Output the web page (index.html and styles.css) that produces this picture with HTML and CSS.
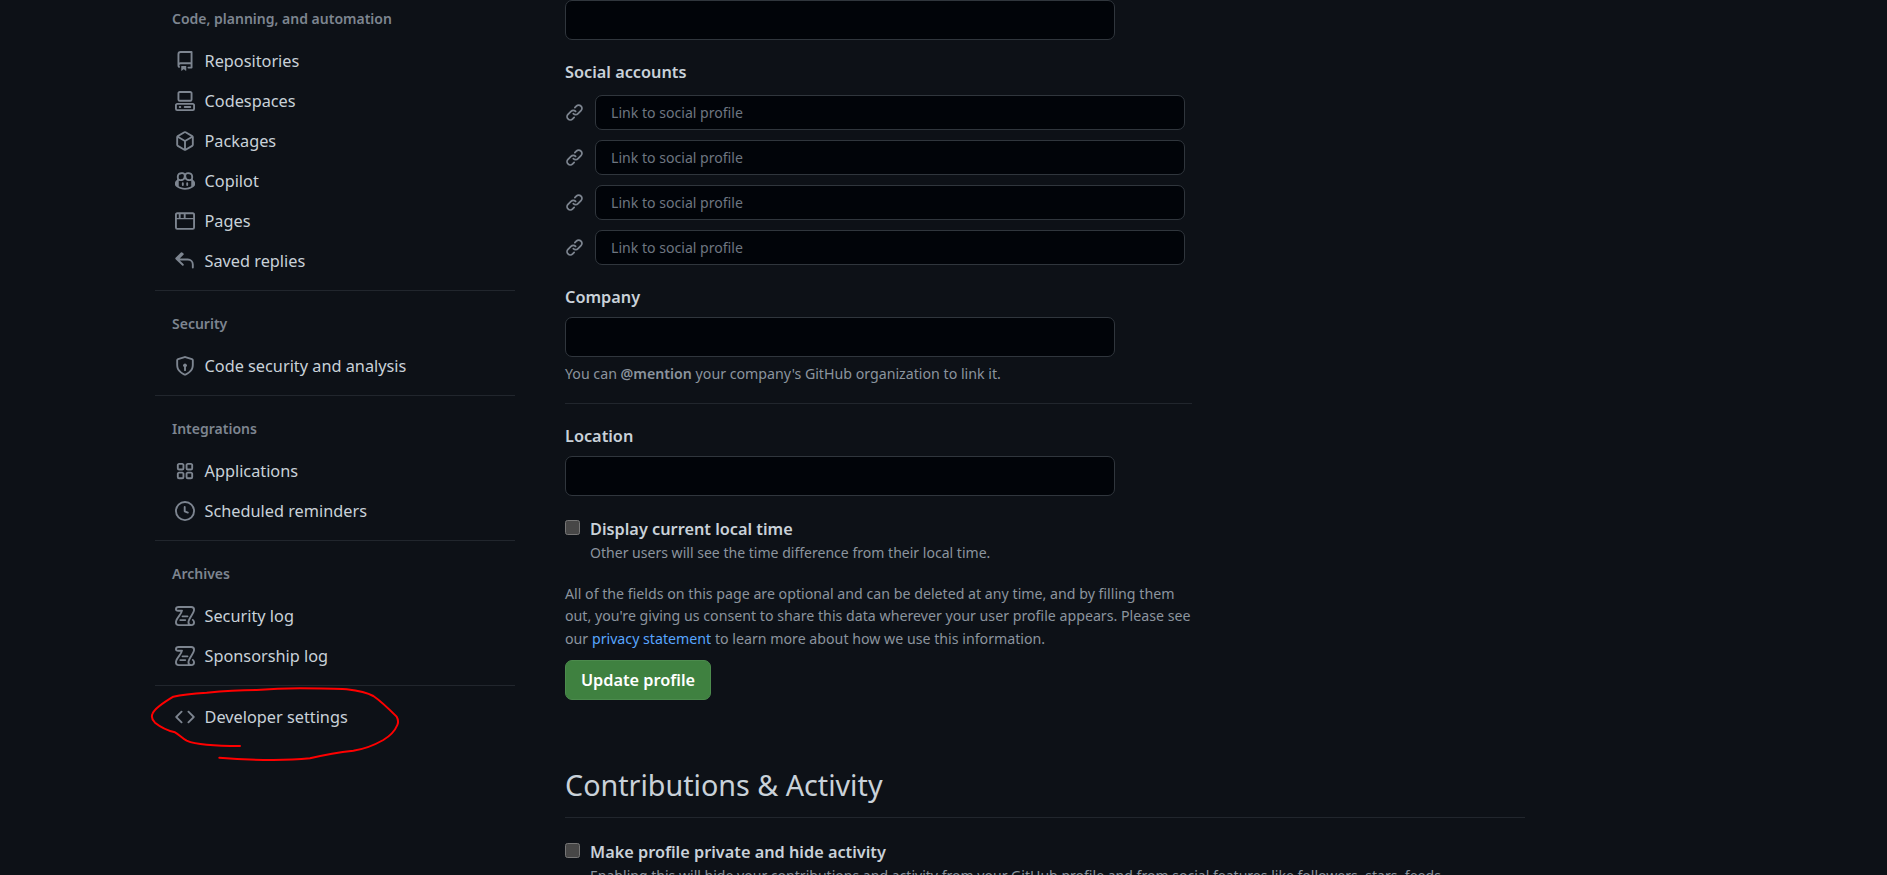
FILE: index.html
```html
<!DOCTYPE html>
<html lang="en">
<head>
<meta charset="utf-8">
<title>Public profile</title>
<link rel="stylesheet" href="styles.css">
</head>
<body>
<svg class="defs" width="0" height="0" aria-hidden="true">
  <symbol id="i-repo" viewBox="0 0 16 16"><path d="M2 2.5A2.5 2.5 0 0 1 4.5 0h8.75a.75.75 0 0 1 .75.75v12.5a.75.75 0 0 1-.75.75h-2.5a.75.75 0 0 1 0-1.5h1.75v-2h-8a1 1 0 0 0-.714 1.7.75.75 0 1 1-1.072 1.05A2.495 2.495 0 0 1 2 11.5Zm10.5-1h-8a1 1 0 0 0-1 1v6.708A2.486 2.486 0 0 1 4.5 9h8ZM5 12.25a.25.25 0 0 1 .25-.25h3.5a.25.25 0 0 1 .25.25v3.25a.25.25 0 0 1-.4.2l-1.45-1.087a.249.249 0 0 0-.3 0L5.4 15.7a.25.25 0 0 1-.4-.2Z"/></symbol>
  <symbol id="i-codespaces" viewBox="0 0 16 16"><path d="M0 11.25c0-.966.784-1.75 1.75-1.75h12.5c.966 0 1.75.784 1.75 1.75v3A1.75 1.75 0 0 1 14.25 16H1.75A1.75 1.75 0 0 1 0 14.25Zm2-9.5C2 .784 2.784 0 3.75 0h8.5C13.216 0 14 .784 14 1.75v5a1.75 1.75 0 0 1-1.75 1.75h-8.5A1.75 1.75 0 0 1 2 6.75Zm1.75-.25a.25.25 0 0 0-.25.25v5c0 .138.112.25.25.25h8.5a.25.25 0 0 0 .25-.25v-5a.25.25 0 0 0-.25-.25Zm-2 9.5a.25.25 0 0 0-.25.25v3c0 .138.112.25.25.25h12.5a.25.25 0 0 0 .25-.25v-3a.25.25 0 0 0-.25-.25Z"/><path d="M7 12.75a.75.75 0 0 1 .75-.75h4.5a.75.75 0 0 1 0 1.5h-4.5a.75.75 0 0 1-.75-.75Zm-4 0a.75.75 0 0 1 .75-.75h.5a.75.75 0 0 1 0 1.5h-.5a.75.75 0 0 1-.75-.75Z"/></symbol>
  <symbol id="i-package" viewBox="0 0 16 16"><path d="m8.878.392 5.25 3.045c.54.314.872.89.872 1.514v6.098a1.75 1.75 0 0 1-.872 1.514l-5.25 3.045a1.75 1.75 0 0 1-1.756 0l-5.25-3.045A1.75 1.75 0 0 1 1 11.049V4.951c0-.624.332-1.201.872-1.514L7.122.392a1.75 1.75 0 0 1 1.756 0ZM7.875 1.69l-4.63 2.685L8 7.133l4.755-2.758-4.63-2.685a.248.248 0 0 0-.25 0ZM2.5 5.677v5.372c0 .09.047.171.125.216l4.625 2.683V8.432Zm6.25 8.271 4.625-2.683a.25.25 0 0 0 .125-.216V5.677L8.75 8.432Z"/></symbol>
  <symbol id="i-copilot" viewBox="0 0 16 16"><path d="M7.998 15.035c-4.562 0-7.873-2.914-7.998-3.749V9.338c.085-.628.677-1.686 1.588-2.065.013-.07.024-.143.036-.218.029-.183.06-.384.126-.612-.201-.508-.254-1.084-.254-1.656 0-.87.128-1.769.693-2.484.579-.733 1.494-1.124 2.724-1.261 1.206-.134 2.262.034 2.944.765.05.053.096.108.139.165.044-.057.094-.112.143-.165.682-.731 1.738-.899 2.944-.765 1.23.137 2.145.528 2.724 1.261.566.715.693 1.614.693 2.484 0 .572-.053 1.148-.254 1.656.066.228.098.429.126.612.012.076.024.148.037.218.924.385 1.522 1.471 1.591 2.095v1.872c0 .766-3.351 3.795-8.002 3.795Zm0-1.485c2.28 0 4.584-1.11 5.002-1.433V7.862l-.023-.116c-.49.21-1.075.291-1.727.291-1.146 0-2.059-.327-2.71-.991A3.222 3.222 0 0 1 8 6.303a3.24 3.24 0 0 1-.544.743c-.65.664-1.563.991-2.71.991-.652 0-1.236-.081-1.727-.291l-.023.116v4.255c.419.323 2.722 1.433 5.002 1.433ZM6.762 2.83c-.193-.206-.637-.413-1.682-.297-1.019.113-1.479.404-1.713.7-.247.312-.369.789-.369 1.554 0 .793.129 1.171.308 1.371.162.181.519.379 1.442.379.853 0 1.339-.235 1.638-.54.315-.322.527-.827.617-1.553.117-.935-.037-1.395-.241-1.614Zm4.155-.297c-1.044-.116-1.488.091-1.681.297-.204.219-.359.679-.242 1.614.091.726.303 1.231.618 1.553.299.305.784.54 1.638.54.922 0 1.28-.198 1.442-.379.179-.2.308-.578.308-1.371 0-.765-.123-1.242-.37-1.554-.233-.296-.693-.587-1.713-.7Z"/><path d="M6.25 9.037a.75.75 0 0 1 .75.75v1.501a.75.75 0 0 1-1.5 0V9.787a.75.75 0 0 1 .75-.75Zm4.25.75v1.501a.75.75 0 0 1-1.5 0V9.787a.75.75 0 0 1 1.5 0Z"/></symbol>
  <symbol id="i-browser" viewBox="0 0 16 16"><path d="M0 2.75C0 1.784.784 1 1.75 1h12.5c.966 0 1.75.784 1.75 1.75v10.5A1.75 1.75 0 0 1 14.25 15H1.75A1.75 1.75 0 0 1 0 13.25ZM14.5 6.5h-13v6.75c0 .138.112.25.25.25h12.5a.25.25 0 0 0 .25-.25Zm-6-1h6V2.75a.25.25 0 0 0-.25-.25H8.5Zm-1.5 0V2.5H4.5v3ZM3 2.5H1.75a.25.25 0 0 0-.25.25V5.5H3Z"/></symbol>
  <symbol id="i-reply" viewBox="0 0 16 16"><path d="M6.78 1.97a.75.75 0 0 1 0 1.06L3.81 6h6.44A4.75 4.75 0 0 1 15 10.75v2.5a.75.75 0 0 1-1.5 0v-2.5a3.25 3.25 0 0 0-3.25-3.25H3.81l2.97 2.97a.749.749 0 1 1-1.06 1.06L.47 6.53a.75.75 0 0 1 0-1.06l4.25-4.25a.75.75 0 0 1 1.06 0Z"/></symbol>
  <symbol id="i-shield" viewBox="0 0 16 16"><path d="M7.467.133a1.748 1.748 0 0 1 1.066 0l5.25 1.68A1.75 1.75 0 0 1 15 3.48V7c0 1.566-.32 3.182-1.303 4.682-.983 1.498-2.585 2.813-5.032 3.855a1.697 1.697 0 0 1-1.33 0c-2.447-1.042-4.049-2.357-5.032-3.855C1.32 10.182 1 8.566 1 7V3.48a1.75 1.75 0 0 1 1.217-1.667Zm.61 1.429a.25.25 0 0 0-.153 0l-5.25 1.68a.25.25 0 0 0-.174.238V7c0 1.358.275 2.666 1.057 3.86.784 1.194 2.121 2.34 4.366 3.297a.196.196 0 0 0 .154 0c2.245-.956 3.582-2.104 4.366-3.298C13.225 9.666 13.5 8.36 13.5 7V3.48a.251.251 0 0 0-.174-.237l-5.25-1.68ZM8.75 8.873v2.452a.75.75 0 0 1-1.5 0V8.873a1.5 1.5 0 1 1 1.5 0Z"/></symbol>
  <symbol id="i-apps" viewBox="0 0 16 16"><path d="M1.5 3.25c0-.966.784-1.75 1.75-1.75h2.5c.966 0 1.75.784 1.75 1.75v2.5A1.75 1.75 0 0 1 5.75 7.5h-2.5A1.75 1.75 0 0 1 1.5 5.75Zm7 0c0-.966.784-1.75 1.75-1.75h2.5c.966 0 1.75.784 1.75 1.75v2.5a1.75 1.75 0 0 1-1.75 1.75h-2.5A1.75 1.75 0 0 1 8.5 5.75Zm-7 7c0-.966.784-1.75 1.75-1.75h2.5c.966 0 1.75.784 1.75 1.75v2.5a1.75 1.75 0 0 1-1.75 1.75h-2.5a1.75 1.75 0 0 1-1.75-1.75Zm7 0c0-.966.784-1.75 1.75-1.75h2.5c.966 0 1.75.784 1.75 1.75v2.5a1.75 1.75 0 0 1-1.75 1.75h-2.5a1.75 1.75 0 0 1-1.75-1.75ZM3.25 3a.25.25 0 0 0-.25.25v2.5c0 .138.112.25.25.25h2.5A.25.25 0 0 0 6 5.75v-2.5A.25.25 0 0 0 5.75 3Zm7 0a.25.25 0 0 0-.25.25v2.5c0 .138.112.25.25.25h2.5a.25.25 0 0 0 .25-.25v-2.5a.25.25 0 0 0-.25-.25Zm-7 7a.25.25 0 0 0-.25.25v2.5c0 .138.112.25.25.25h2.5a.25.25 0 0 0 .25-.25v-2.5a.25.25 0 0 0-.25-.25Zm7 0a.25.25 0 0 0-.25.25v2.5c0 .138.112.25.25.25h2.5a.25.25 0 0 0 .25-.25v-2.5a.25.25 0 0 0-.25-.25Z"/></symbol>
  <symbol id="i-clock" viewBox="0 0 16 16"><path d="M8 0a8 8 0 1 1 0 16A8 8 0 0 1 8 0ZM1.5 8a6.5 6.5 0 1 0 13 0 6.5 6.5 0 0 0-13 0Zm7-3.25v2.992l2.028.812a.75.75 0 0 1-.557 1.392l-2.5-1A.751.751 0 0 1 7 8.25v-3.5a.75.75 0 0 1 1.5 0Z"/></symbol>
  <symbol id="i-log" viewBox="0 0 16 16"><path class="scroll" d="M5.6 3.75H2.6C1.5 3.75.75 3.2.75 2.6.75 1.5 1.7.75 3 .75h10c1.3 0 2.25 1 2.25 2.25 0 3-4.5 7-4.5 10a2.25 2.25 0 0 0 4.5 0c0-.8-.4-1.4-1-1.9M13 15.25H3A2.25 2.25 0 0 1 .75 13c0-3 4.3-6.2 4.85-9.25"/><path class="scroll" d="M6 8.25h4M4.2 11.25h4"/></symbol>
  <symbol id="i-link" viewBox="0 0 16 16"><path d="m7.775 3.275 1.25-1.25a3.5 3.5 0 1 1 4.95 4.95l-2.5 2.5a3.5 3.5 0 0 1-4.95 0 .751.751 0 0 1 .018-1.042.751.751 0 0 1 1.042-.018 1.998 1.998 0 0 0 2.83 0l2.5-2.5a2.002 2.002 0 0 0-2.83-2.83l-1.25 1.25a.751.751 0 0 1-1.042-.018.751.751 0 0 1-.018-1.042Zm-4.69 9.64a1.998 1.998 0 0 0 2.83 0l1.25-1.25a.751.751 0 0 1 1.042.018.751.751 0 0 1 .018 1.042l-1.25 1.25a3.5 3.5 0 1 1-4.95-4.95l2.5-2.5a3.5 3.5 0 0 1 4.95 0 .751.751 0 0 1-.018 1.042.751.751 0 0 1-1.042.018 1.998 1.998 0 0 0-2.83 0l-2.5 2.5a1.998 1.998 0 0 0 0 2.83Z"/></symbol>
  <symbol id="i-code" viewBox="0 0 16 16"><path d="m11.28 3.22 4.25 4.25a.75.75 0 0 1 0 1.06l-4.25 4.25a.749.749 0 0 1-1.275-.326.749.749 0 0 1 .215-.734L13.94 8l-3.72-3.72a.749.749 0 0 1 .326-1.275.749.749 0 0 1 .734.215Zm-6.56 0a.751.751 0 0 1 1.042.018.751.751 0 0 1 .018 1.042L2.06 8l3.72 3.72a.749.749 0 0 1-.326 1.275.749.749 0 0 1-.734-.215L.47 8.53a.75.75 0 0 1 0-1.06Z"/></symbol>
</svg>

<div class="page">
  <nav class="sidebar">
    <section class="group group-first">
      <h3 class="group-title">Code, planning, and automation</h3>
      <a class="item"><svg class="icon"><use href="#i-repo"/></svg><span>Repositories</span></a>
      <a class="item"><svg class="icon"><use href="#i-codespaces"/></svg><span>Codespaces</span></a>
      <a class="item"><svg class="icon"><use href="#i-package"/></svg><span>Packages</span></a>
      <a class="item"><svg class="icon"><use href="#i-copilot"/></svg><span>Copilot</span></a>
      <a class="item"><svg class="icon"><use href="#i-browser"/></svg><span>Pages</span></a>
      <a class="item"><svg class="icon"><use href="#i-reply"/></svg><span>Saved replies</span></a>
    </section>
    <section class="group">
      <h3 class="group-title">Security</h3>
      <a class="item"><svg class="icon"><use href="#i-shield"/></svg><span>Code security and analysis</span></a>
    </section>
    <section class="group">
      <h3 class="group-title">Integrations</h3>
      <a class="item"><svg class="icon"><use href="#i-apps"/></svg><span>Applications</span></a>
      <a class="item"><svg class="icon"><use href="#i-clock"/></svg><span>Scheduled reminders</span></a>
    </section>
    <section class="group">
      <h3 class="group-title">Archives</h3>
      <a class="item"><svg class="icon"><use href="#i-log"/></svg><span>Security log</span></a>
      <a class="item"><svg class="icon"><use href="#i-log"/></svg><span>Sponsorship log</span></a>
    </section>
    <section class="group group-last">
      <a class="item"><svg class="icon"><use href="#i-code"/></svg><span>Developer settings</span></a>
    </section>
  </nav>

  <main class="main">
    <form class="form">
      <input class="field" type="text" aria-label="Twitter username">

      <label class="label label-social">Social accounts</label>
      <div class="social-list">
        <div class="social-row"><svg class="icon link-icon"><use href="#i-link"/></svg><input class="field-social" type="text" placeholder="Link to social profile"></div>
        <div class="social-row"><svg class="icon link-icon"><use href="#i-link"/></svg><input class="field-social" type="text" placeholder="Link to social profile"></div>
        <div class="social-row"><svg class="icon link-icon"><use href="#i-link"/></svg><input class="field-social" type="text" placeholder="Link to social profile"></div>
        <div class="social-row"><svg class="icon link-icon"><use href="#i-link"/></svg><input class="field-social" type="text" placeholder="Link to social profile"></div>
      </div>

      <label class="label label-company">Company</label>
      <input class="field" type="text" aria-label="Company">
      <p class="note note-company">You can <strong>@mention</strong> your company's GitHub organization to link it.</p>
      <hr class="rule rule-form">

      <label class="label label-location">Location</label>
      <input class="field" type="text" aria-label="Location">

      <div class="check check-time">
        <input class="box" type="checkbox">
        <div>
          <div class="check-label">Display current local time</div>
          <p class="note note-check">Other users will see the time difference from their local time.</p>
        </div>
      </div>

      <p class="note para">All of the fields on this page are optional and can be deleted at any time, and by filling them<br>out, you're giving us consent to share this data wherever your user profile appears. Please see<br>our <a class="link">privacy statement</a> to learn more about how we use this information.</p>
      <button class="btn" type="button">Update profile</button>
    </form>

    <h2 class="section-title">Contributions &amp; Activity</h2>
    <div class="check check-private">
      <input class="box" type="checkbox">
      <div>
        <div class="check-label">Make profile private and hide activity</div>
        <p class="note note-check note-nowrap">Enabling this will hide your contributions and activity from your GitHub profile and from social features like followers, stars, feeds,</p>
      </div>
    </div>
  </main>
</div>

<svg class="scribble" viewBox="0 0 1200 600" aria-hidden="true"><path d="M300 498C270 498 230 497 200 494 170 492 155 489 140 482 125 474 115 462 105 457 85 452 60 440 45 428 35 418 33 410 38 400 45 385 70 368 100 350 130 343 170 340 200 338 260 332 320 330 350 330 400 326 450 325 480 325 540 325 590 326 620 328 660 333 685 340 700 348 725 365 750 390 770 410 776 420 774 430 772 435 765 452 750 468 730 480 700 497 670 508 640 512 600 516 570 520 510 535 470 539 430 540 400 540 340 540 280 537 238 533"/></svg>
</body>
</html>
```
FILE: styles.css
```css
* { box-sizing: border-box; }
html, body { margin: 0; padding: 0; height: 100%; }
body {
  background: #0d1117;
  color: #c9d1d9;
  font-family: "Noto Sans", "Open Sans", sans-serif;
  font-size: 16.3px;
  overflow: hidden;
  position: relative;
}
.defs { position: absolute; }
.page { display: flex; height: 875px; overflow: hidden; padding-left: 155px; }

/* sidebar */
.sidebar { width: 360px; flex: none; }
.group { border-top: 1px solid #21262d; padding: 22px 0 9px; }
.group-first { border-top: 0; padding-top: 8px; }
.group-last { padding-top: 11px; }
.group-title {
  margin: 0 0 12px;
  padding-left: 17px;
  font-size: 14px;
  line-height: 21px;
  font-weight: 600;
  color: #7d8590;
}
.item {
  display: flex;
  align-items: center;
  height: 40px;
  padding-left: 20px;
  gap: 9.5px;
  color: #c9d1d9;
}
.icon { width: 20px; height: 20px; flex: none; fill: #7d8590; }
.scroll { fill: none; stroke: #7d8590; stroke-width: 1.5; stroke-linecap: round; stroke-linejoin: round; }

/* main column */
.main { width: 960px; margin-left: 50px; flex: none; }
.form { width: 626.5px; }
.field, .field-social {
  display: block;
  background: #010409;
  border: 1px solid #30363d;
  border-radius: 7px;
  color: #c9d1d9;
  font: inherit;
  outline: none;
}
.field { width: 550px; height: 40px; }
.field-social {
  width: 590px;
  height: 34.5px;
  padding: 0 15px;
  font-size: 14.1px;
}
.field-social::placeholder { color: #6e7681; opacity: 1; }
.label {
  display: block;
  font-weight: 600;
  line-height: 21px;
  color: #c9d1d9;
}
.label-social { margin: 22px 0 12px; }
.label-company { margin: 22px 0 9px; }
.label-location { margin: 22px 0 9px; }
.social-list { display: flex; flex-direction: column; gap: 10.5px; }
.social-row { display: flex; align-items: center; gap: 11px; }
.link-icon { width: 19px; height: 19px; }
.note {
  margin: 0;
  font-size: 14.2px;
  line-height: 19px;
  color: #8b949e;
}
.note strong { font-weight: 600; }
.note-company { margin-top: 7.5px; }
.rule { border: 0; border-top: 1px solid #21262d; margin: 0; }
.rule-form { margin-top: 19.5px; }
.check { display: flex; align-items: flex-start; gap: 10px; }
.check-time { margin-top: 24px; }
.box {
  appearance: none;
  width: 15px;
  height: 15px;
  margin: 0;
  flex: none;
  background: #474747;
  border: 1px solid #767676;
  border-radius: 2.5px;
}
.check-label {
  font-weight: 600;
  line-height: 21px;
  margin-top: -1px;
  color: #c9d1d9;
}
.note-check { margin-top: 3px; font-size: 14.05px; }
.note-nowrap { white-space: nowrap; }
.para { margin-top: 21px; line-height: 22.5px; }
.link { color: #58a6ff; }
.btn {
  display: block;
  margin-top: 9.5px;
  height: 40px;
  width: 146px;
  padding: 0;
  background: #3f8140;
  border: 1px solid #4c8b4d;
  border-radius: 7px;
  color: #ffffff;
  font: inherit;
  font-weight: 600;
}
.section-title {
  margin: 66px 0 0;
  padding-bottom: 13px;
  border-bottom: 1px solid #21262d;
  font-size: 28.7px;
  line-height: 38px;
  font-weight: 400;
  color: #c9d1d9;
}
.check-private { margin-top: 25px; }

/* hand-drawn annotation over the page */
.scribble { position: absolute; left: 140px; top: 580px; width: 400px; height: 200px; }
.scribble path { fill: none; stroke: #ff0000; stroke-width: 6; stroke-linecap: round; stroke-linejoin: round; }
```
